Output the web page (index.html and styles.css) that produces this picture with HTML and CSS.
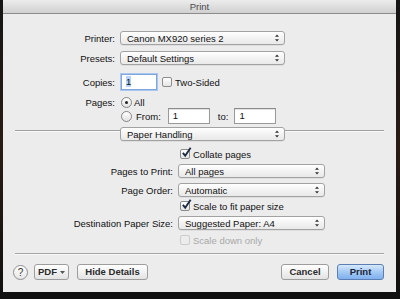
FILE: index.html
```html
<!DOCTYPE html>
<html lang="en">
<head>
  <meta charset="UTF-8">
  <title>Print</title>
  <link rel="stylesheet" href="styles.css">
</head>
<body>

  <div class="dialog">
    <div class="titlebar">Print</div>

    <div class="row top r-printer">
      <span class="label">Printer:</span>
      <div class="popup wide"><span>Canon MX920 series 2</span><svg class="arrows" viewBox="0 0 5 9"><path d="M2.5 0L5 3H0z M2.5 9L0 6h5z"/></svg></div>
    </div>
    <div class="row top r-presets">
      <span class="label">Presets:</span>
      <div class="popup wide"><span>Default Settings</span><svg class="arrows" viewBox="0 0 5 9"><path d="M2.5 0L5 3H0z M2.5 9L0 6h5z"/></svg></div>
    </div>

    <div class="row top r-copies">
      <span class="label">Copies:</span>
      <div class="field focused copies"><span class="sel">1</span></div>
      <span class="check"></span>
      <span class="text">Two-Sided</span>
    </div>

    <div class="row top r-all">
      <span class="label">Pages:</span>
      <span class="radio on"></span>
      <span class="text">All</span>
    </div>
    <div class="row top r-from">
      <span class="label"></span>
      <span class="radio"></span>
      <span class="text from-label">From:</span>
      <div class="field range">1</div>
      <span class="text to-label">to:</span>
      <div class="field range">1</div>
    </div>

    <div class="section-head">
      <div class="rule left"></div>
      <div class="popup wide"><span>Paper Handling</span><svg class="arrows" viewBox="0 0 5 9"><path d="M2.5 0L5 3H0z M2.5 9L0 6h5z"/></svg></div>
      <div class="rule"></div>
    </div>

    <div class="row low r-collate">
      <span class="label"></span>
      <span class="check checked"><svg viewBox="0 0 12 12"><path d="M2 6.5l2.6 3L10.5 0.8"/></svg></span>
      <span class="text">Collate pages</span>
    </div>
    <div class="row low r-ptp">
      <span class="label">Pages to Print:</span>
      <div class="popup narrow"><span>All pages</span><svg class="arrows" viewBox="0 0 5 9"><path d="M2.5 0L5 3H0z M2.5 9L0 6h5z"/></svg></div>
    </div>
    <div class="row low r-order">
      <span class="label">Page Order:</span>
      <div class="popup narrow"><span>Automatic</span><svg class="arrows" viewBox="0 0 5 9"><path d="M2.5 0L5 3H0z M2.5 9L0 6h5z"/></svg></div>
    </div>
    <div class="row low r-scale">
      <span class="label"></span>
      <span class="check checked"><svg viewBox="0 0 12 12"><path d="M2 6.5l2.6 3L10.5 0.8"/></svg></span>
      <span class="text">Scale to fit paper size</span>
    </div>
    <div class="row low r-dest">
      <span class="label">Destination Paper Size:</span>
      <div class="popup narrow"><span>Suggested Paper: A4</span><svg class="arrows" viewBox="0 0 5 9"><path d="M2.5 0L5 3H0z M2.5 9L0 6h5z"/></svg></div>
    </div>
    <div class="row low r-down disabled">
      <span class="label"></span>
      <span class="check"></span>
      <span class="text">Scale down only</span>
    </div>

    <div class="separator"></div>

    <div class="buttons">
      <span class="help">?</span>
      <span class="btn pdf">PDF <svg viewBox="0 0 5 3"><path d="M0 0h5L2.5 3z"/></svg></span>
      <span class="btn details">Hide Details</span>
      <span class="spacer"></span>
      <span class="btn cancel">Cancel</span>
      <span class="btn print">Print</span>
    </div>
  </div>

</body>
</html>
```

FILE: styles.css
```css
body {
  margin: 0;
  width: 400px;
  height: 299px;
  background: linear-gradient(to bottom, #151515 0%, #2a1c14 50%, #101010 100%);
  font-family: 'Liberation Sans', Arial, sans-serif;
  font-size: 9.5px;
  color: #111;
  overflow: hidden;
}

.dialog {
  width: 393px;
  height: 292px;
  margin-left: 3px;
  background: #ececec;
  display: flex;
  flex-direction: column;
}

.titlebar {
  height: 13px;
  line-height: 13px;
  text-align: center;
  color: #4a4a4a;
  font-size: 9.5px;
  background: linear-gradient(to bottom, #ececec, #d0d0d0);
  border-bottom: 1px solid #8c8c8c;
}

/* form rows */
.row {
  display: flex;
  align-items: center;
  height: 14px;
}

.row .label {
  text-align: right;
  flex: none;
}

.row.top .label {
  width: 112px;
  margin-right: 5px;
}

.row.low .label {
  width: 170px;
  margin-right: 5px;
}

.r-printer { margin-top: 17px; }
.r-presets { margin-top: 6px; }
.r-copies { margin-top: 9px; height: 16px; }
.r-all { margin-top: 6px; height: 12px; }
.r-from { height: 16px; }
.r-collate { margin-top: 6px; }
.r-ptp { margin-top: 3px; }
.r-order { margin-top: 5px; }
.r-scale { margin-top: 2px; }
.r-dest { margin-top: 3px; }
.r-down { margin-top: 3px; }

.text {
  white-space: nowrap;
}

/* pop-up buttons */
.popup {
  height: 12px;
  border: 1px solid #a2a2a2;
  border-radius: 3px;
  background: linear-gradient(to bottom, #ffffff, #f3f3f3 50%, #e9e9e9);
  display: flex;
  align-items: center;
  justify-content: space-between;
  padding: 0 5px 0 6px;
  box-sizing: content-box;
  box-shadow: 0 1px 0 rgba(0, 0, 0, 0.06);
}

.popup.wide { width: 152px; }
.popup.narrow { width: 134px; }

.arrows {
  width: 4px;
  height: 8px;
  fill: #333;
}

/* text fields */
.field {
  height: 14px;
  line-height: 14px;
  border: 1px solid #9a9a9a;
  border-top-color: #8a8a8a;
  background: #fff;
  padding-left: 4px;
  box-sizing: content-box;
  box-shadow: inset 0 1px 1px rgba(0, 0, 0, 0.12);
}

.field.copies {
  width: 30px;
  margin-left: 1px;
}

.field.focused {
  border-color: #7ea6dd;
  box-shadow: 0 0 0 1px #a9c7ef;
}

.sel {
  background: #b5d3fb;
}

.field.range {
  width: 36px;
  padding-left: 4px;
}

.from-label { margin-left: 2px; margin-right: 7px; }
.to-label { margin-left: 8px; margin-right: 6px; }

/* checkbox and radio */
.check {
  position: relative;
  width: 8px;
  height: 8px;
  border: 1px solid #8c8c8c;
  border-radius: 2px;
  background: linear-gradient(to bottom, #ffffff, #e4e4e4);
  flex: none;
  margin-right: 3px;
}

.r-copies .check { margin-left: 5px; }
.row.low .check { margin-left: 2px; }

.check svg {
  position: absolute;
  left: 0;
  top: -3px;
  width: 11px;
  height: 11px;
  fill: none;
  stroke: #1b2a40;
  stroke-width: 2;
}

.radio {
  width: 9px;
  height: 9px;
  border: 1px solid #858585;
  border-radius: 50%;
  background: linear-gradient(to bottom, #ffffff, #e2e2e2);
  margin-left: 1px;
  margin-right: 2px;
  flex: none;
  display: flex;
  align-items: center;
  justify-content: center;
}

.radio.on::after {
  content: "";
  width: 3px;
  height: 3px;
  border-radius: 50%;
  background: #222;
}

.disabled .text { color: #a8a8a8; }
.disabled .check { border-color: #cbcbcb; background: #ececec; }

/* paper handling header */
.section-head {
  display: flex;
  align-items: flex-start;
  margin-top: 3px;
  padding: 0 12px;
}

.rule {
  flex: 1;
  height: 0;
  margin-top: 3px;
  border-top: 1px solid #9e9e9e;
  border-bottom: 1px solid #fafafa;
}

.rule.left {
  flex: none;
  width: 105px;
}

.section-head .popup { margin: 0; }

.separator {
  margin: 6px 12px 0 12px;
  border-top: 1px solid #a6a6a6;
  border-bottom: 1px solid #f8f8f8;
}

/* bottom buttons */
.buttons {
  display: flex;
  align-items: center;
  margin-top: 9px;
  padding: 0 12px 0 10px;
  height: 16px;
}

.help {
  width: 13px;
  height: 13px;
  border: 1px solid #8e8e8e;
  border-radius: 50%;
  background: linear-gradient(to bottom, #ffffff, #e6e6e6);
  font-size: 10px;
  line-height: 13px;
  text-align: center;
  color: #333;
  flex: none;
}

.btn {
  height: 14px;
  line-height: 14px;
  border: 1px solid #9d9d9d;
  border-radius: 3px;
  background: linear-gradient(to bottom, #ffffff, #f1f1f1 50%, #e3e3e3);
  text-align: center;
  font-weight: bold;
  color: #2a2a2a;
  box-sizing: content-box;
  flex: none;
}

.pdf {
  width: 33px;
  margin-left: 6px;
  display: flex;
  align-items: center;
  justify-content: center;
  gap: 3px;
}

.pdf svg {
  width: 5px;
  height: 3px;
  fill: #555;
}

.details {
  width: 69px;
  margin-left: 8px;
}

.spacer { flex: 1; }

.cancel {
  width: 46px;
}

.print {
  width: 45px;
  margin-left: 8px;
  border-color: #5b7fb3;
  background: linear-gradient(to bottom, #d6e8fd, #a4c9f4 50%, #7fb0ee);
  color: #1a2436;
}
```
